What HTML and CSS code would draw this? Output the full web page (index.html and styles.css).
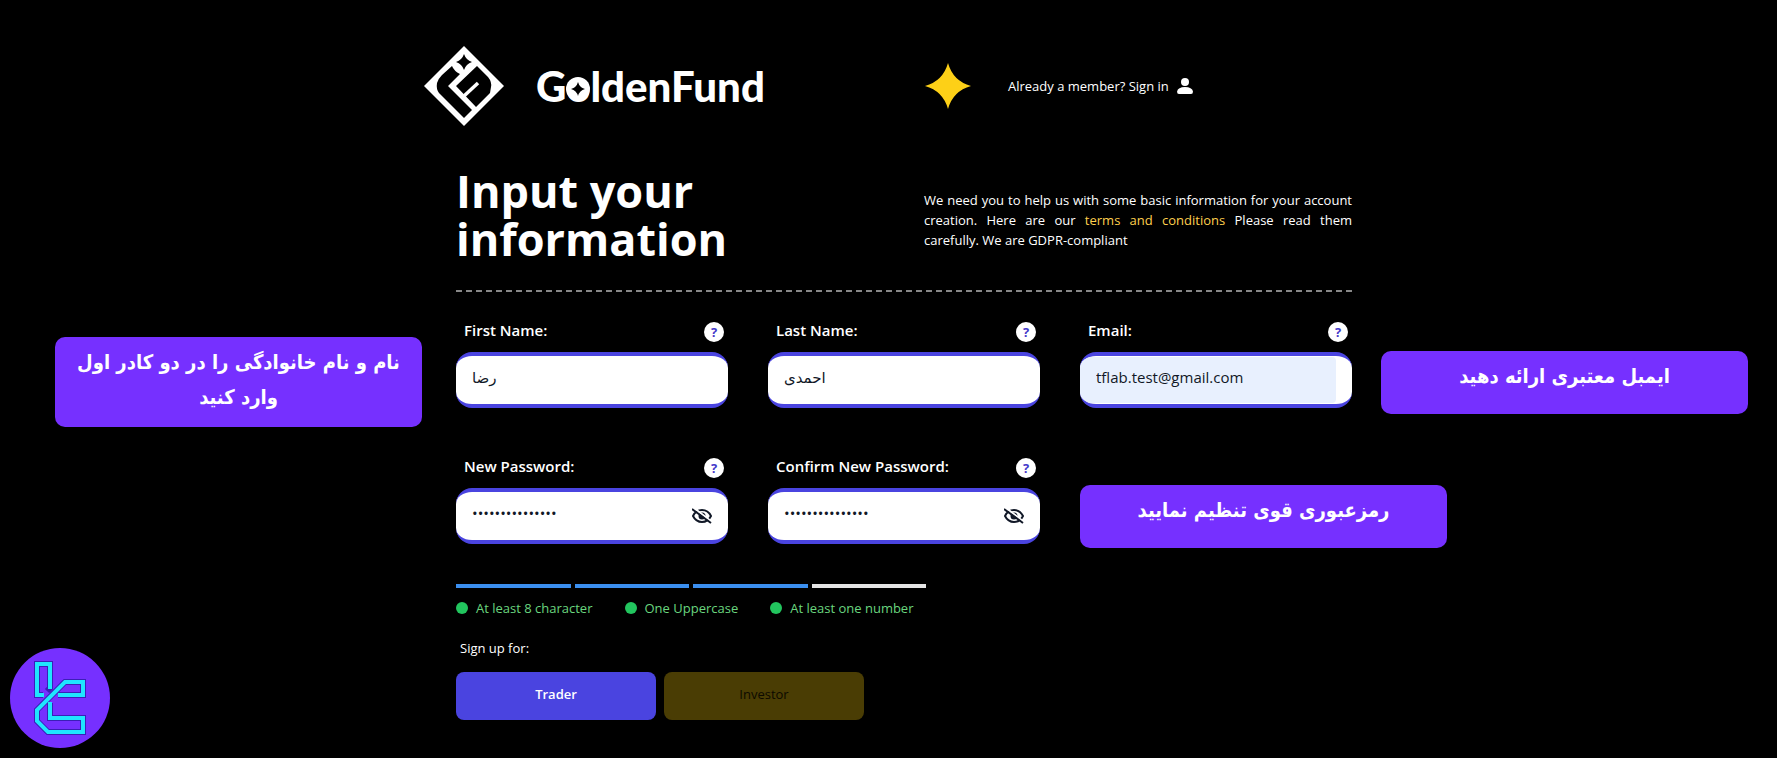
FILE: index.html
```html
<!DOCTYPE html>
<html lang="en">
<head>
  <meta charset="UTF-8">
  <meta name="viewport" content="width=device-width, initial-scale=1.0">
  <title>GoldenFund - Sign up</title>
  <link rel="stylesheet" href="styles.css">
</head>
<body>
  <div class="page">
    <aside class="note note-names" lang="fa" dir="rtl">نام و نام خانوادگی را در دو کادر اول وارد کنید</aside>

    <main class="signup">
      <header class="header">
        <div class="brand">
          <svg class="brand-mark" viewBox="0 0 80 80" aria-hidden="true">
            <path fill="#fff" d="M40 0 80 40 40 80 0 40Z"/>
            <path fill="#000" d="M40 8Q42 14 48 16Q42 18 40 24Q38 18 32 16Q38 14 40 8Z"/>
            <path fill="#000" d="M28 20Q30 25 36 28L24 40 48 64 40 72 15 47Q12 43 13 37Q14 33 18 29Z"/>
            <path fill="#000" d="M53 20 64 31Q68 36 67 41L66 47 52 61 32 40Z"/>
            <path fill="none" stroke="#fff" stroke-width="3.500" d="M40 50 54 37"/>
          </svg>
          <span class="brand-name">G<span class="brand-o">o<svg viewBox="0 0 24 24" aria-hidden="true"><circle cx="12" cy="12" r="12" fill="#fff"/><path d="M12 5Q13.500 10.500 19 12Q13.500 13.500 12 19Q10.500 13.500 5 12Q10.500 10.500 12 5Z"/></svg></span>ldenFund</span>
        </div>
        <div class="member">
          <svg class="star" viewBox="0 0 48 48" aria-hidden="true"><path fill="#fdd017" d="M24 1Q29 19 47 24Q29 29 24 47Q19 29 1 24Q19 19 24 1Z"/></svg>
          <a class="signin" href="#">Already a member? Sign in
            <svg viewBox="0 0 16 16" aria-hidden="true"><circle cx="8" cy="4" r="4"/><path d="M0 13.500Q1 9 8 9T16 13.500Q16 16 14 16H2Q0 16 0 13.500Z"/></svg>
          </a>
        </div>
      </header>

      <section class="intro">
        <h1>Input your information</h1>
        <p>We need you to help us with some basic information for your account creation. Here are our <a href="#">terms and conditions</a> Please read them carefully. We are GDPR-compliant</p>
      </section>

      <form>
        <div class="fields">
          <div class="field">
            <div class="field-head"><label for="first">First Name:</label><button type="button" class="help">?</button></div>
            <div class="box"><input id="first" type="text" value="رضا"></div>
          </div>
          <div class="field">
            <div class="field-head"><label for="last">Last Name:</label><button type="button" class="help">?</button></div>
            <div class="box"><input id="last" type="text" value="احمدی"></div>
          </div>
          <div class="field">
            <div class="field-head"><label for="email">Email:</label><button type="button" class="help">?</button></div>
            <div class="box"><input id="email" class="filled" type="email" value="tflab.test@gmail.com"></div>
          </div>
          <div class="field">
            <div class="field-head"><label for="pass">New Password:</label><button type="button" class="help">?</button></div>
            <div class="box">
              <input id="pass" type="password" value="Password1234567">
              <button type="button" class="eye" aria-label="Show password"><svg viewBox="0 0 20 16"><path class="lid" d="M1 8Q4 2 10 2T19 8Q16 14 10 14T1 8Z"/><circle cx="10" cy="8" r="3.500"/><path class="gap" d="M2 0 20 14"/><path class="slash" d="M0 1 19 15"/></svg></button>
            </div>
          </div>
          <div class="field">
            <div class="field-head"><label for="confirm">Confirm New Password:</label><button type="button" class="help">?</button></div>
            <div class="box">
              <input id="confirm" type="password" value="Password1234567">
              <button type="button" class="eye" aria-label="Show password"><svg viewBox="0 0 20 16"><path class="lid" d="M1 8Q4 2 10 2T19 8Q16 14 10 14T1 8Z"/><circle cx="10" cy="8" r="3.500"/><path class="gap" d="M2 0 20 14"/><path class="slash" d="M0 1 19 15"/></svg></button>
            </div>
          </div>
          <aside class="note note-password" lang="fa" dir="rtl">رمزعبوری قوی تنظیم نمایید</aside>
        </div>

        <div class="strength">
          <span class="on"></span><span class="on"></span><span class="on"></span><span></span>
        </div>
        <ul class="rules">
          <li>At least 8 character</li>
          <li>One Uppercase</li>
          <li>At least one number</li>
        </ul>

        <p class="role-title">Sign up for:</p>
        <div class="roles">
          <button type="button" class="role trader">Trader</button>
          <button type="button" class="role investor">Investor</button>
        </div>
      </form>
    </main>

    <aside class="note note-email" lang="fa" dir="rtl">ایمبل معتبری ارائه دهید</aside>
  </div>

  <svg class="badge" viewBox="0 0 100 100" aria-hidden="true">
    <circle cx="50" cy="50" r="50" fill="#7630ff"/>
    <g fill="none" stroke="#3a1fb8" stroke-width="6"><path d="M37 43 40 40V16H27V47H33M48 47H73V34H55L27 62V73L38 84H73V70H40V55"/></g>
    <g fill="none" stroke="#1fe5ff" stroke-width="4"><path d="M40 41V16H27V47H34M48 47H73V34H55L27 62V73L38 84H73V70H40V54"/></g>
  </svg>
</body>
</html>
```
FILE: styles.css
```css
* {
  box-sizing: border-box;
}

body {
  margin: 0;
  min-height: 100vh;
  background: #000;
  color: #fff;
  font-family: 'Open Sans', 'DejaVu Sans', sans-serif;
  font-size: 13px;
  line-height: 20px;
}

button,
input {
  font-family: inherit;
}

.page {
  display: flex;
  align-items: flex-start;
  justify-content: center;
  padding: 0 29px 0 55px;
}

.signup {
  flex: 0 1 896px;
  min-width: 0;
  margin: 0 29px 0 34px;
  padding: 46px 0 36px;
}

/* header */
.header,
.intro {
  display: grid;
  grid-template-columns: 1fr 1fr;
  column-gap: 40px;
  align-items: center;
}

.brand {
  display: flex;
  align-items: center;
  gap: 32px;
  margin-left: -32px;
}

.brand-mark {
  width: 80px;
  height: 80px;
}

.brand-name {
  font-family: Lato, sans-serif;
  font-weight: 900;
  font-size: 42px;
  line-height: 48px;
}

.brand-o {
  position: relative;
}

.brand-o svg {
  position: absolute;
  left: 0;
  bottom: 10px;
  width: 24px;
  height: 24px;
}

.member {
  display: flex;
  align-items: center;
  gap: 36px;
}

.star {
  width: 48px;
  height: 48px;
}

.signin {
  display: flex;
  align-items: center;
  gap: 8px;
  color: #fff;
  text-decoration: none;
}

.signin svg {
  width: 16px;
  height: 16px;
  fill: #fff;
}

/* title row */
.intro {
  padding: 41px 0 27px;
  margin-bottom: 28px;
  border-bottom: 2px dashed #888;
}

.intro h1 {
  max-width: 280px;
  margin: 0;
  font-size: 45px;
  line-height: 48px;
}

.intro p {
  margin: 10px 0 0;
  text-align: justify;
}

.intro a {
  color: #ffcf4d;
  text-decoration: none;
}

/* form */
.fields {
  display: grid;
  grid-template-columns: repeat(3, minmax(0, 1fr));
  gap: 48px 40px;
}

.field-head {
  display: flex;
  justify-content: space-between;
  height: 32px;
  padding: 0 4px 0 8px;
}

.field-head label {
  font-size: 15px;
  font-weight: 600;
}

.help {
  width: 20px;
  height: 20px;
  margin-top: 2px;
  padding: 0;
  border: 0;
  border-radius: 50%;
  background: #fff;
  color: #4338ca;
  font-size: 13px;
  font-weight: 700;
  line-height: 20px;
}

.box {
  display: flex;
  align-items: center;
  height: 56px;
  padding-right: 16px;
  border-top: 4px solid #4a44e0;
  border-bottom: 4px solid #4a44e0;
  border-radius: 16px;
  background: #fff;
  overflow: hidden;
}

.box input {
  flex: 1;
  min-width: 0;
  height: 46px;
  padding: 0 16px 6px;
  border: 0;
  border-radius: 4px;
  outline: 0;
  background: transparent;
  color: #111827;
  font-size: 15px;
}

.box .filled {
  background: #e8f0fe;
}

.eye {
  width: 20px;
  height: 16px;
  padding: 0;
  border: 0;
  background: none;
}

.eye svg {
  display: block;
  fill: #111827;
}

.eye .lid {
  fill: none;
  stroke: #111827;
  stroke-width: 2;
}

.eye .gap,
.eye .slash {
  stroke: #fff;
  stroke-width: 2;
}

.eye .slash {
  stroke: #111827;
}

.strength {
  display: grid;
  grid-template-columns: repeat(4, 1fr);
  gap: 4px;
  max-width: 470px;
  margin-top: 36px;
}

.strength span {
  height: 4px;
  background: #e5e5e5;
}

.strength .on {
  background: #3b8ff0;
}

.rules {
  display: flex;
  gap: 32px;
  margin: 10px 0 0;
  padding: 0;
  list-style: none;
  color: #6ad67f;
}

.rules li {
  display: flex;
  align-items: center;
  gap: 8px;
}

.rules li::before {
  content: '';
  width: 12px;
  height: 12px;
  border-radius: 50%;
  background: #22c55e;
}

.role-title {
  margin: 20px 4px 14px;
}

.roles {
  display: flex;
  gap: 8px;
}

.role {
  width: 200px;
  height: 48px;
  padding: 0 0 4px;
  border: 0;
  border-radius: 8px;
  font-size: 13px;
}

.trader {
  background: #4a44e0;
  color: #fff;
  font-weight: 600;
}

.investor {
  background: #4a3d04;
  color: #0c0a00;
}

/* purple hints */
.note {
  flex: 0 1 367px;
  padding: 8px 20px 20px;
  border-radius: 10px;
  background: #7630ff;
  font-family: 'DejaVu Sans Condensed', 'DejaVu Sans', sans-serif;
  font-size: 20px;
  font-weight: 700;
  line-height: 35px;
  text-align: center;
}

.note-names {
  margin-top: 337px;
  padding-bottom: 12px;
}

.note-email {
  margin-top: 351px;
}

.note-password {
  align-self: start;
  width: 367px;
  margin-top: 29px;
}

.badge {
  position: fixed;
  left: 10px;
  bottom: 10px;
  width: 100px;
  height: 100px;
}
```
